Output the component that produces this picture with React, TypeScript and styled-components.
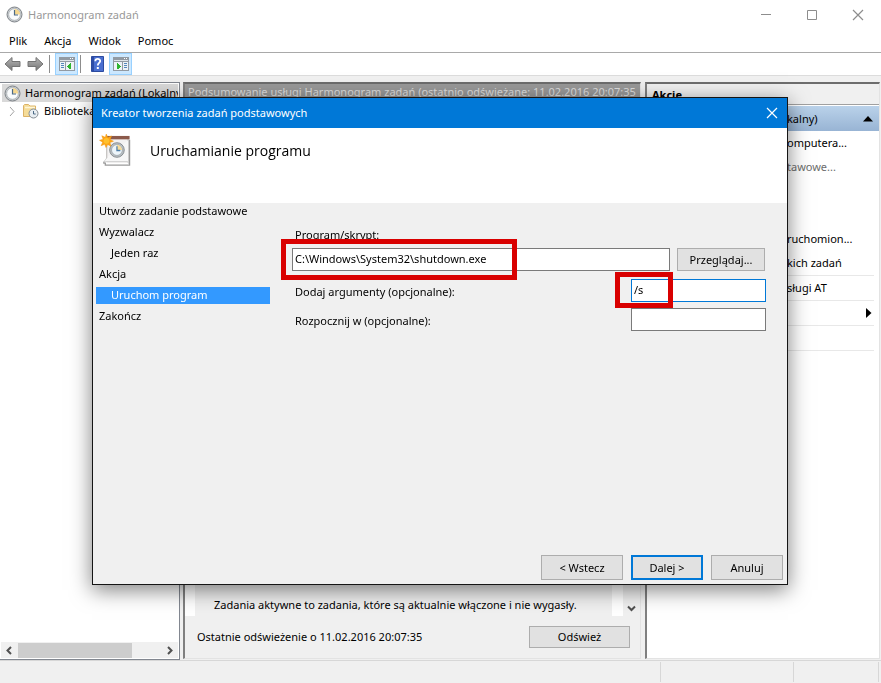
import React from "react";
import styled, { createGlobalStyle, css } from "styled-components";

const GlobalStyle = createGlobalStyle`
  * { box-sizing: border-box; }
  html, body, #root { margin: 0; height: 100%; }
  body {
    background: #f0f0f0;
    color: #000;
    font: 11px/16px "Noto Sans", "Open Sans", sans-serif;
    overflow: hidden;
  }
  button, input { font: inherit; color: inherit; }
  svg { flex-shrink: 0; }
`;

const Window = styled.div`
  display: flex;
  flex-direction: column;
  height: 100vh;
  background: #f0f0f0;
`;

const TitleBar = styled.header`
  display: flex;
  align-items: center;
  height: 29px;
  padding-left: 6px;
  gap: 5px;
  background: #fff;
  color: #999;
`;

const WindowTitle = styled.h1`
  flex: 1;
  margin: 0;
  font-size: 11px;
  font-weight: 400;
  white-space: nowrap;
`;

const CaptionButtons = styled.div`
  display: flex;
`;

const CaptionButton = styled.button`
  display: flex;
  align-items: center;
  justify-content: center;
  width: 46px;
  height: 28px;
  padding: 0;
  border: 0;
  background: transparent;
`;

const MenuBar = styled.nav`
  display: flex;
  height: 24px;
  gap: 1px;
  padding: 0 1px;
  background: #fff;
  border-bottom: 1px solid #a9a9a9;
`;

const MenuButton = styled.button`
  padding: 0 8px;
  border: 0;
  background: transparent;
`;

const Toolbar = styled.div`
  display: flex;
  align-items: center;
  height: 23px;
  padding-left: 1px;
  background: #fff;
  border-bottom: 1px solid #dcdcdc;
`;

const ToolButton = styled.button<{ $active?: boolean }>`
  display: flex;
  align-items: center;
  justify-content: center;
  width: 23px;
  height: 22px;
  padding: 0;
  border: 1px solid ${(p) => (p.$active ? "#99d1ff" : "transparent")};
  background: ${(p) => (p.$active ? "#cce8ff" : "transparent")};
`;

const ToolSeparator = styled.span`
  width: 1px;
  height: 18px;
  margin: 0 5px 0 2px;
  background: #8d8d8d;
`;

const Panes = styled.main`
  flex: 1;
  display: grid;
  grid-template-columns: 180px minmax(0, 1fr) 235px;
  padding: 6px 1px 0 0;
  min-height: 0;
`;

const TreePane = styled.section`
  display: flex;
  flex-direction: column;
  border: 1px solid #828790;
  border-left: 0;
  background: #fff;
  padding: 1px;
  min-height: 0;
`;

const Tree = styled.ul`
  flex: 1;
  margin: 0;
  padding: 0;
  list-style: none;
  overflow: hidden;
`;

const TreeItem = styled.li<{ $selected?: boolean }>`
  display: flex;
  align-items: center;
  height: 18px;
  gap: ${(p) => (p.$selected ? 4 : 5)}px;
  padding-left: ${(p) => (p.$selected ? 2 : 6)}px;
  margin-left: 1px;
  white-space: nowrap;
  background: ${(p) => (p.$selected ? "#d9d9d9" : "transparent")};
`;

const ScrollBar = styled.div`
  display: flex;
  align-items: center;
  height: 16px;
  background: #f0f0f0;
`;

const ScrollArrow = styled.button`
  display: flex;
  align-items: center;
  justify-content: center;
  width: 17px;
  height: 16px;
  padding: 0;
  border: 0;
  background: transparent;
`;

const ScrollTrack = styled.div`
  flex: 1;
  height: 15px;
`;

const ScrollThumb = styled.div`
  width: 80%;
  height: 100%;
  background: #cdcdcd;
`;

const sunken = css`
  border: solid;
  border-width: 2px 1px 1px 2px;
  border-color: #6d6d6d #e3e3e3 #e3e3e3 #808080;
`;

const SummaryPane = styled.section`
  ${sunken}
  display: flex;
  flex-direction: column;
  margin: 0 4px 1px 3px;
  min-height: 0;
  min-width: 0;
`;

const SummaryHeader = styled.h2`
  margin: 0;
  height: 21px;
  padding-left: 3px;
  background: #999;
  color: #dedede;
  font-size: 11px;
  font-weight: 400;
  white-space: nowrap;
  overflow: hidden;
`;

const SummaryBody = styled.div`
  flex: 1;
  display: flex;
  min-height: 0;
  background: #fff;
`;

const SummaryText = styled.div`
  flex: 1;
  display: flex;
  align-items: flex-end;
  margin: 0 11px 0 10px;
  padding: 0 0 3px 19px;
  background: #f0f0f0;
  white-space: nowrap;
`;

const VerticalScroll = styled.div`
  display: flex;
  align-items: flex-end;
  width: 17px;
  background: #f0f0f0;
`;

const SummaryFooter = styled.footer`
  display: flex;
  align-items: center;
  justify-content: space-between;
  height: 42px;
  padding: 0 10px 0 12px;
`;

const Button = styled.button<{ $primary?: boolean; $width: number; $height: number }>`
  width: ${(p) => p.$width}px;
  height: ${(p) => p.$height}px;
  padding: 0;
  border: ${(p) => (p.$primary ? "2px solid #0078d7" : "1px solid #adadad")};
  background: #e1e1e1;
`;

const ActionsPane = styled.section`
  ${sunken}
  margin-bottom: 1px;
  background: #fff;
  min-height: 0;
`;

const ActionsHeader = styled.h2`
  margin: 0;
  height: 21px;
  padding: 3px 0 0 5px;
  background: #f0f0f0;
  border-bottom: 1px solid #a0a0a0;
  font-size: 11px;
  font-weight: 700;
`;

const ActionGroup = styled.button`
  display: flex;
  align-items: center;
  justify-content: space-between;
  width: 100%;
  height: 25px;
  margin-top: 1px;
  padding: 0 6px 0 140px;
  border: 0;
  background: linear-gradient(#bad2ea, #98b4d4);
`;

const ActionList = styled.ul`
  margin: 0 5px 0 0;
  padding: 0;
  list-style: none;
`;

const ActionItem = styled.li<{ $divided?: boolean }>`
  height: ${(p) => (p.$divided ? 25 : 24)}px;
  border-bottom: ${(p) => (p.$divided ? "1px solid #e8e8e8" : "0")};
`;

const ActionButton = styled.button`
  display: flex;
  align-items: center;
  justify-content: space-between;
  width: 100%;
  height: 24px;
  padding: 0 2px 0 140px;
  border: 0;
  background: transparent;
  white-space: nowrap;
  &:disabled { color: #6d6d6d; }
`;

const StatusBar = styled.footer`
  display: grid;
  grid-template-columns: 1fr 133px 85px;
  height: 23px;
  padding: 1px 2px 1px 0;
  border-top: 1px solid #d7d7d7;
`;

const StatusCell = styled.div`
  border-right: 1px solid #d7d7d7;
`;

const Dialog = styled.div`
  position: fixed;
  inset: 97px 93px 98px 92px;
  display: flex;
  flex-direction: column;
  border: 1px solid #151515;
  background: #f0f0f0;
  box-shadow: 0 5px 20px rgba(0, 0, 0, 0.5);
`;

const DialogTitleBar = styled.header`
  display: flex;
  align-items: center;
  justify-content: space-between;
  height: 30px;
  padding-left: 8px;
  background: #0078d7;
  color: #fff;
`;

const DialogTitle = styled.h2`
  margin: 0;
  font-size: 11px;
  font-weight: 400;
`;

const CloseButton = styled(CaptionButton)`
  width: 30px;
`;

const PageHeader = styled.div`
  display: flex;
  align-items: flex-start;
  gap: 18px;
  height: 75px;
  padding: 6px 0 0 6px;
  background: #fff;
`;

const PageTitle = styled.h3`
  margin: 7px 0 0;
  font-family: "Open Sans", "Noto Sans", sans-serif;
  font-size: 14px;
  line-height: 20px;
  font-weight: 400;
`;

const DialogBody = styled.div`
  flex: 1;
  display: flex;
  min-height: 0;
`;

const Steps = styled.ol`
  width: 177px;
  margin: 0;
  padding: 0 0 0 3px;
  list-style: none;
`;

const Step = styled.li<{ $nested?: boolean; $current?: boolean }>`
  height: 17px;
  margin-bottom: 4px;
  padding-left: ${(p) => (p.$nested ? 15 : 3)}px;
  background: ${(p) => (p.$current ? "#3399ff" : "transparent")};
  color: ${(p) => (p.$current ? "#fff" : "#000")};
`;

const Form = styled.form`
  flex: 1;
  display: flex;
  flex-direction: column;
  padding: 24px 21px 0 22px;
`;

const ProgramRow = styled.div`
  display: flex;
  align-items: center;
  gap: 7px;
  margin: 5px 1px 8px 0;
`;

const FieldRow = styled.div`
  display: flex;
  align-items: center;
  justify-content: space-between;
  margin-bottom: 6px;
`;

const Label = styled.label`
  padding: 2px 0 0 3px;
`;

const ProgramLabel = styled(Label)`
  padding-top: 0;
`;

const FieldBox = styled.div<{ $grow?: boolean }>`
  position: relative;
  flex: ${(p) => (p.$grow ? "1" : "0 0 135px")};
`;

const TextInput = styled.input<{ $focused?: boolean }>`
  display: block;
  width: 100%;
  height: 23px;
  padding: 0 2px 2px;
  border: 1px solid ${(p) => (p.$focused ? "#0078d7" : "#7a7a7a")};
  border-radius: 0;
  background: #fff;
  outline: none;
`;

const Highlight = styled.span<{ $width: number; $height: number; $left: number; $top: number }>`
  position: absolute;
  left: ${(p) => p.$left}px;
  top: ${(p) => p.$top}px;
  width: ${(p) => p.$width}px;
  height: ${(p) => p.$height}px;
  border: 5px solid #d90000;
  pointer-events: none;
`;

const DialogFooter = styled.footer`
  display: flex;
  justify-content: flex-end;
  gap: 8px;
  padding: 0 4px 4px;
`;

const ClockIcon = ({ size = 17 }: { size?: number }) => (
  <svg width={size} height={size} viewBox="0 0 17 17" aria-hidden="true">
    <circle cx="8.5" cy="8.5" r="7.5" fill="#c9cdd0" stroke="#7f8489" />
    <circle cx="8.5" cy="8.5" r="5.8" fill="#fafcfd" stroke="#a4a9ad" strokeWidth=".7" />
    <path d="M8.5 8.5V2.9a5.600 5.600 0 0 1 5.600 5.600z" fill="#f6d88f" />
    <path d="M8.5 4v5h3.500" fill="none" stroke="#4c6a85" strokeWidth="1.2" />
  </svg>
);

const FolderClockIcon = () => (
  <svg width="17" height="16" viewBox="0 0 17 16" aria-hidden="true">
    <path d="M1.500 13.500v-11l1-1h4l1.500 1.500h5.500v10.500z" fill="#f5dc98" stroke="#dcb266" />
    <path d="M3 4.500h10" stroke="#fff6d8" strokeWidth="1.500" />
    <circle cx="11.500" cy="10.500" r="4.500" fill="#e9eef2" stroke="#858d94" />
    <path d="M11.500 8v3h2.200" fill="none" stroke="#4c6a85" />
  </svg>
);

const ArrowIcon = ({ back }: { back?: boolean }) => (
  <svg width="17" height="16" viewBox="0 0 17 16" aria-hidden="true">
    <defs>
      <linearGradient id={back ? "arrowBack" : "arrowNext"} x2="0" y2="1">
        <stop stopColor="#b5b5b5" />
        <stop offset=".5" stopColor="#969696" />
        <stop offset="1" stopColor="#747474" />
      </linearGradient>
    </defs>
    <path
      d={back ? "M1 8l7-6.500v4h8v5H8v4z" : "M16 8L9 1.500v4H1v5h8v4z"}
      fill={back ? "url(#arrowBack)" : "url(#arrowNext)"}
      stroke="#747474"
    />
  </svg>
);

const PaneIcon = ({ right }: { right?: boolean }) => (
  <svg width="16" height="14" viewBox="0 0 16 14" shapeRendering="crispEdges" aria-hidden="true">
    <path d="M0 0h16v14H0z" fill="#929aa3" />
    <path d="M11 1h1v1h-1zM13 1h1v1h-1z" fill="#fff" />
    <path d="M1 3h14v1H1z" fill="#dfe5ea" />
    <path d="M1 5h14v8H1z" fill="#eef3f7" />
    <path d={right ? "M9 5h1v8H9z" : "M6 5h1v8H6z"} fill="#929aa3" />
    <path
      d={right ? "M11 6h3v1h-3zM11 8h3v1h-3zM11 10h3v1h-3z" : "M2 6h3v1H2zM2 8h3v1H2zM2 10h3v1H2z"}
      fill="#5487bb"
    />
    <path d={right ? "M4 6h1v1h1v1h1v1h1v1H7v1H6v1H4z" : "M12 6h-1v1h-1v1H9v1H8v1h1v1h1v1h2z"} fill="#2fb52f" />
  </svg>
);

const HelpIcon = () => (
  <svg width="13" height="16" viewBox="0 0 13 16" aria-hidden="true">
    <path d="M.5.5h12v15H.5z" fill="#4a6fd0" stroke="#2c4ba0" />
    <path d="M1 1h2v14H1z" fill="#2d4ca6" />
    <path d="M4.300 5.200c0-3 4.900-3 4.900-.2 0 2-2.400 2-2.400 4.600" fill="none" stroke="#fff" strokeWidth="1.800" />
    <path d="M5.800 11h2v2h-2z" fill="#fff" />
  </svg>
);

const TaskIcon = () => (
  <svg width="33" height="33" viewBox="0 0 33 34" aria-hidden="true">
    <path d="M7.500 3.500h22v25h-22z" fill="#f3f2f2" stroke="#b5b2b0" />
    <path d="M7 2h24v3.500H7z" fill="#8c5a4b" />
    <path d="M8 24l-3.500 4.500H29l1 2V6" fill="#f7f7f7" stroke="#bcbcbc" strokeWidth=".6" />
    <path d="M4.500 28.500V30H6v2h25V6" fill="none" stroke="#9a9a9a" strokeWidth="1.300" />
    <circle cx="18" cy="16.500" r="7.500" fill="#bdc2c6" stroke="#858b90" />
    <circle cx="18" cy="16.500" r="5.600" fill="#edf5fa" stroke="#98a0a6" strokeWidth=".8" />
    <path d="M18 16.500v-5.300a5.300 5.300 0 0 1 5.300 5.300z" fill="#f7dc9b" />
    <path d="M18 12.500v4.500h3.500" fill="none" stroke="#4b7da8" strokeWidth="1.300" />
    <path
      d="M7 0l1.600 3.600L12.400 2 11 5.600l3.400 1.900-3.600 1.300 1 3.700-3.400-1.800L6.700 14 5.400 10.600 1.700 12l1.600-3.600L0 6.500l3.700-1.100L2.400 1.800 6 3.400z"
      fill="#ffa514"
      stroke="#ee9714"
      strokeWidth=".5"
    />
    <circle cx="7.200" cy="7" r="3" fill="#ffc02e" />
  </svg>
);

const CrossIcon = ({ color }: { color: string }) => (
  <svg width="12" height="12" viewBox="0 0 12 12" aria-hidden="true">
    <path d="M1 1l10 10M11 1L1 11" stroke={color} strokeWidth="1.200" />
  </svg>
);

const ChevronIcon = ({ d, color = "#505050", width = 2 }: { d: string; color?: string; width?: number }) => (
  <svg width="9" height="9" viewBox="0 0 9 9" aria-hidden="true">
    <path d={d} fill="none" stroke={color} strokeWidth={width} />
  </svg>
);

const menus = ["Plik", "Akcja", "Widok", "Pomoc"];

const steps = [
  { text: "Utwórz zadanie podstawowe" },
  { text: "Wyzwalacz" },
  { text: "Jeden raz", nested: true },
  { text: "Akcja" },
  { text: "Uruchom program", nested: true, current: true },
  { text: "Zakończ" },
];

const actions = [
  { text: "omputera..." },
  { text: "tawowe...", disabled: true },
  { text: "" },
  { text: "" },
  { text: "ruchomion..." },
  { text: "kich zadań", divided: true },
  { text: "sługi AT", divided: true },
  { text: "", divided: true, submenu: true },
  { text: "", divided: true },
];

export default function App() {
  return (
    <>
      <GlobalStyle />
      <Window>
        <TitleBar>
          <ClockIcon />
          <WindowTitle>Harmonogram zadań</WindowTitle>
          <CaptionButtons>
            <CaptionButton aria-label="Minimalizuj">
              <svg width="10" height="10"><path d="M0 4.500h10" stroke="#8d8d8d" /></svg>
            </CaptionButton>
            <CaptionButton aria-label="Maksymalizuj">
              <svg width="10" height="10"><path d="M.5.5h9v9h-9z" fill="none" stroke="#8d8d8d" /></svg>
            </CaptionButton>
            <CaptionButton aria-label="Zamknij">
              <CrossIcon color="#8d8d8d" />
            </CaptionButton>
          </CaptionButtons>
        </TitleBar>
        <MenuBar>
          {menus.map((name) => <MenuButton key={name}>{name}</MenuButton>)}
        </MenuBar>
        <Toolbar>
          <ToolButton aria-label="Wstecz"><ArrowIcon back /></ToolButton>
          <ToolButton aria-label="Dalej"><ArrowIcon /></ToolButton>
          <ToolSeparator />
          <ToolButton $active aria-label="Drzewo konsoli"><PaneIcon /></ToolButton>
          <ToolSeparator />
          <ToolButton aria-label="Pomoc"><HelpIcon /></ToolButton>
          <ToolButton $active aria-label="Okienko akcji"><PaneIcon right /></ToolButton>
        </Toolbar>

        <Panes>
          <TreePane>
            <Tree>
              <TreeItem $selected><ClockIcon />Harmonogram zadań (Lokalny)</TreeItem>
              <TreeItem>
                <ChevronIcon d="M2 0l4 4.500L2 9" color="#a0a0a0" width={1} />
                <FolderClockIcon />
                Biblioteka
              </TreeItem>
            </Tree>
            <ScrollBar>
              <ScrollArrow aria-label="Przewiń w lewo"><ChevronIcon d="M6 1L2.500 4.500 6 8" /></ScrollArrow>
              <ScrollTrack><ScrollThumb /></ScrollTrack>
              <ScrollArrow aria-label="Przewiń w prawo"><ChevronIcon d="M3 1l3.500 3.500L3 8" /></ScrollArrow>
            </ScrollBar>
          </TreePane>

          <SummaryPane>
            <SummaryHeader>
              Podsumowanie usługi Harmonogram zadań (ostatnio odświeżane: 11.02.2016 20:07:35
            </SummaryHeader>
            <SummaryBody>
              <SummaryText>Zadania aktywne to zadania, które są aktualnie włączone i nie wygasły.</SummaryText>
              <VerticalScroll>
                <ScrollArrow aria-label="Przewiń w dół"><ChevronIcon d="M1 2.500L4.500 6 8 2.500" /></ScrollArrow>
              </VerticalScroll>
            </SummaryBody>
            <SummaryFooter>
              <span>Ostatnie odświeżenie o 11.02.2016 20:07:35</span>
              <Button $width={101} $height={22}>Odśwież</Button>
            </SummaryFooter>
          </SummaryPane>

          <ActionsPane>
            <ActionsHeader>Akcje</ActionsHeader>
            <ActionGroup>
              kalny)
              <svg width="10" height="6" aria-hidden="true"><path d="M0 5.500L5 0l5 5.500z" /></svg>
            </ActionGroup>
            <ActionList>
              {actions.map((a, i) => (
                <ActionItem key={i} $divided={a.divided}>
                  {(a.text || a.submenu) && (
                    <ActionButton disabled={a.disabled} aria-label={a.submenu ? "Widok" : undefined}>
                      <span>{a.text}</span>
                      {a.submenu && <svg width="6" height="10" aria-hidden="true"><path d="M0 0l5.500 5L0 10z" /></svg>}
                    </ActionButton>
                  )}
                </ActionItem>
              ))}
            </ActionList>
          </ActionsPane>
        </Panes>

        <StatusBar><StatusCell /><StatusCell /><StatusCell /></StatusBar>
      </Window>

      <Dialog role="dialog" aria-labelledby="wizard-title">
        <DialogTitleBar>
          <DialogTitle id="wizard-title">Kreator tworzenia zadań podstawowych</DialogTitle>
          <CloseButton aria-label="Zamknij"><CrossIcon color="#fff" /></CloseButton>
        </DialogTitleBar>
        <PageHeader>
          <TaskIcon />
          <PageTitle>Uruchamianie programu</PageTitle>
        </PageHeader>
        <DialogBody>
          <Steps>
            {steps.map((s) => (
              <Step key={s.text} $nested={s.nested} $current={s.current}>{s.text}</Step>
            ))}
          </Steps>
          <Form onSubmit={(e) => e.preventDefault()}>
            <ProgramLabel htmlFor="program">Program/skrypt:</ProgramLabel>
            <ProgramRow>
              <FieldBox $grow>
                <TextInput id="program" defaultValue="C:\Windows\System32\shutdown.exe" />
                <Highlight $left={-11} $top={-9} $width={236} $height={41} />
              </FieldBox>
              <Button type="button" $width={88} $height={23}>Przeglądaj...</Button>
            </ProgramRow>
            <FieldRow>
              <Label htmlFor="arguments">Dodaj argumenty (opcjonalne):</Label>
              <FieldBox>
                <TextInput id="arguments" $focused defaultValue="/s" />
                <Highlight $left={-16} $top={-7} $width={58} $height={36} />
              </FieldBox>
            </FieldRow>
            <FieldRow>
              <Label htmlFor="start-in">Rozpocznij w (opcjonalne):</Label>
              <FieldBox><TextInput id="start-in" /></FieldBox>
            </FieldRow>
          </Form>
        </DialogBody>
        <DialogFooter>
          <Button $width={82} $height={25}>&lt; Wstecz</Button>
          <Button $primary $width={72} $height={25}>Dalej &gt;</Button>
          <Button $width={72} $height={25}>Anuluj</Button>
        </DialogFooter>
      </Dialog>
    </>
  );
}
